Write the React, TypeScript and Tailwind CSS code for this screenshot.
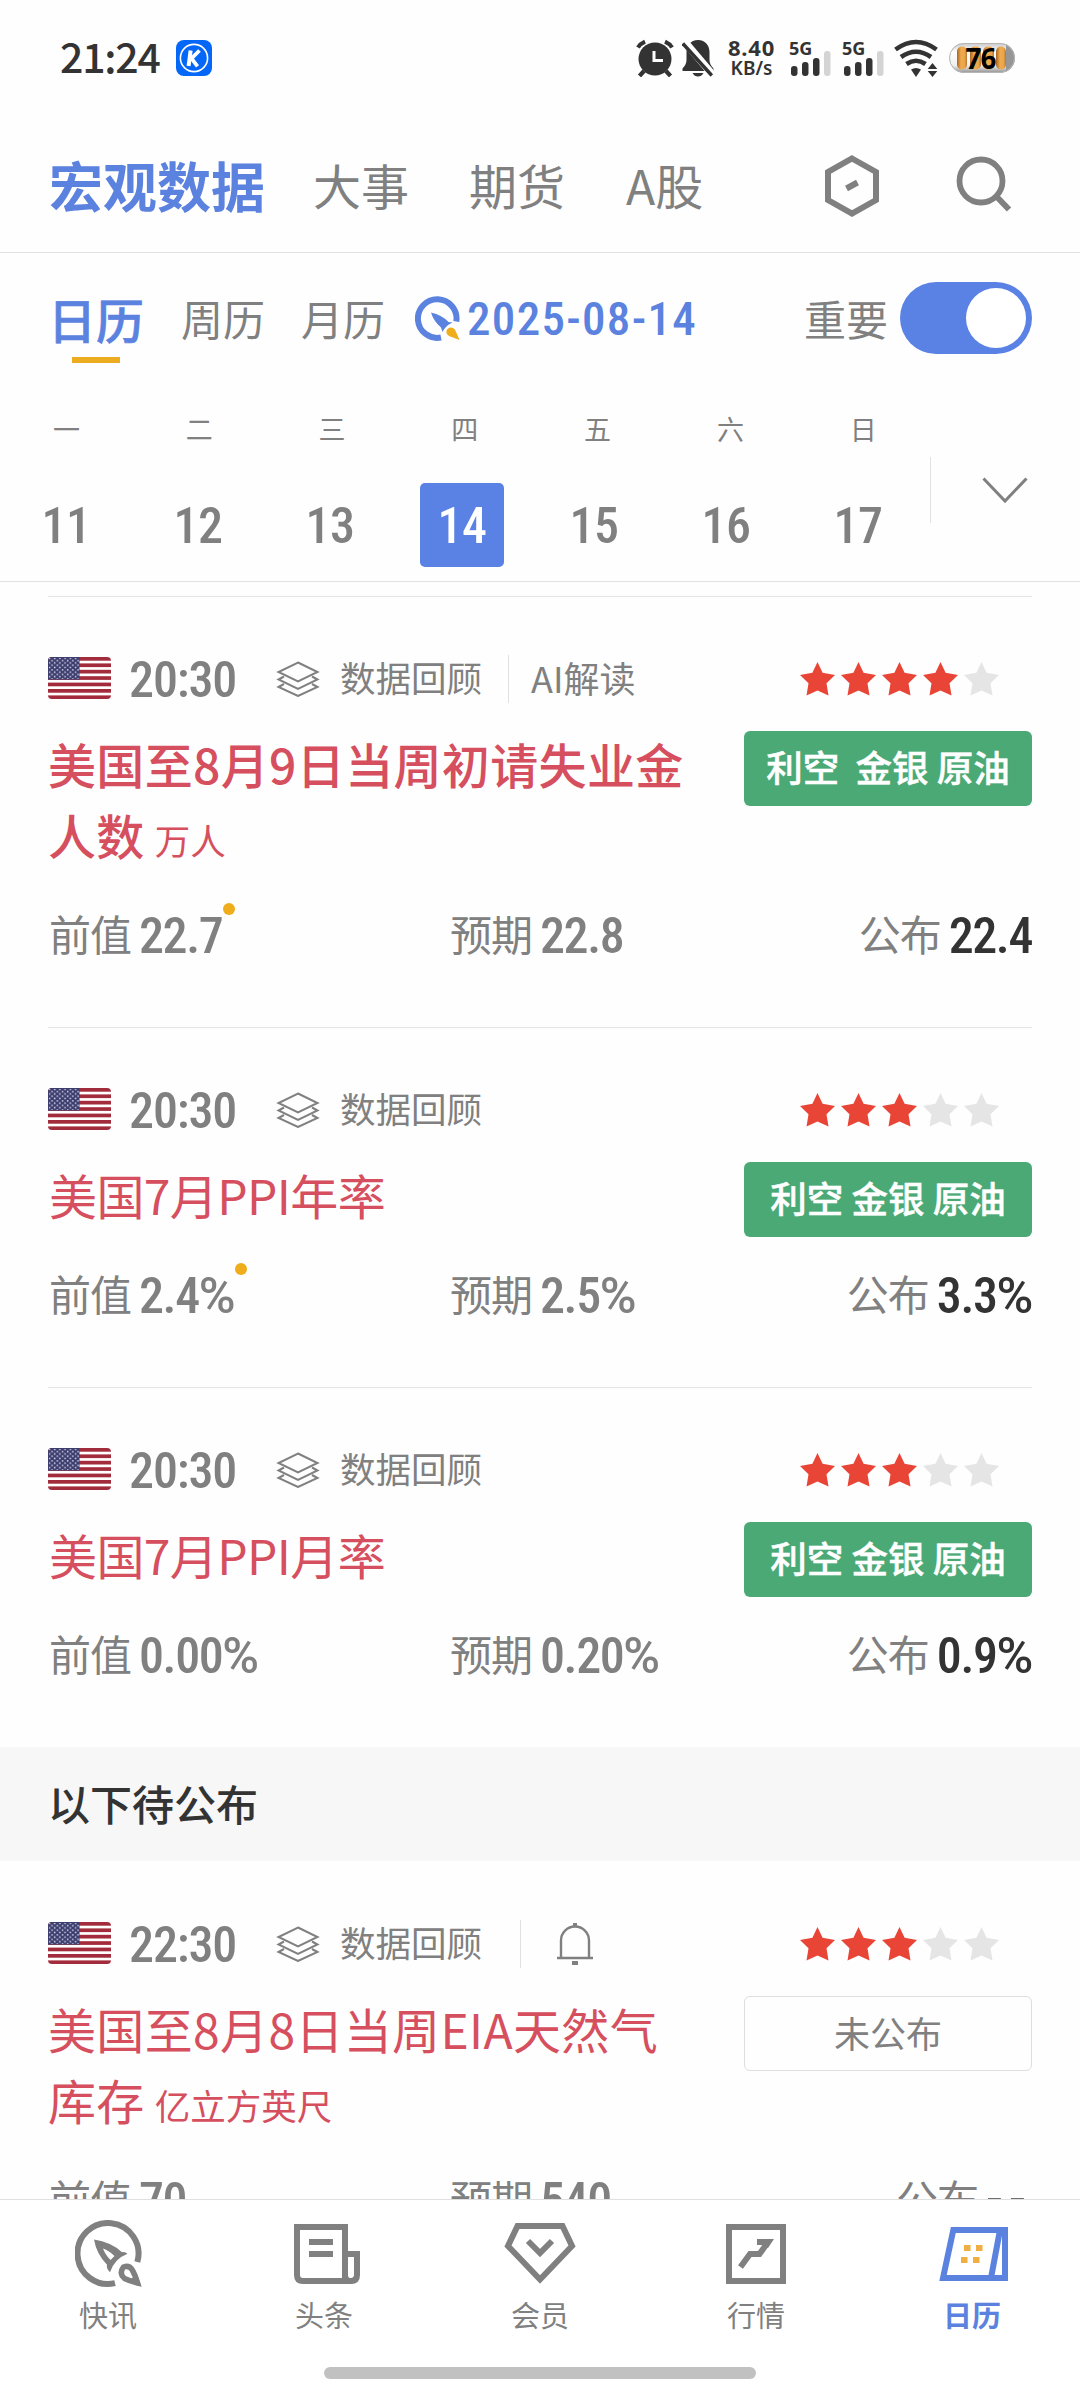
import type { ReactNode } from 'react'

type EventItem = {
  id: string
  time: string
  title: string
  unit?: string
  bold?: boolean
  stars: number
  effect?: string
  ai?: boolean
  remind?: boolean
  revised?: boolean
  previous: string
  forecast: string
  actual: string
}

const PUBLISHED: EventItem[] = [
  {
    id: 'jobless',
    time: '20:30',
    title: '美国至8月9日当周初请失业金人数',
    unit: '万人',
    bold: true,
    stars: 4,
    effect: '利空  金银 原油',
    ai: true,
    revised: true,
    previous: '22.7',
    forecast: '22.8',
    actual: '22.4',
  },
  {
    id: 'ppi-year',
    time: '20:30',
    title: '美国7月PPI年率',
    stars: 3,
    effect: '利空 金银 原油',
    revised: true,
    previous: '2.4%',
    forecast: '2.5%',
    actual: '3.3%',
  },
  {
    id: 'ppi-month',
    time: '20:30',
    title: '美国7月PPI月率',
    stars: 3,
    effect: '利空 金银 原油',
    previous: '0.00%',
    forecast: '0.20%',
    actual: '0.9%',
  },
]

const PENDING: EventItem[] = [
  {
    id: 'eia',
    time: '22:30',
    title: '美国至8月8日当周EIA天然气库存',
    unit: '亿立方英尺',
    stars: 3,
    remind: true,
    previous: '70',
    forecast: '540',
    actual: '--',
  },
]

const WEEKDAYS = ['一', '二', '三', '四', '五', '六', '日']
const DAYS = [11, 12, 13, 14, 15, 16, 17]
const SELECTED_DAY = 14

function Num({ children, className = '' }: { children: ReactNode; className?: string }) {
  return (
    <span className={`font-['Roboto_Condensed','Roboto',sans-serif] font-medium whitespace-nowrap ${className}`}>
      {children}
    </span>
  )
}

function SignalIcon() {
  return (
    <div className="relative h-[36px] w-[42px]">
      <span className="absolute -top-[1px] left-0 font-['Noto_Sans',sans-serif] text-[18px] leading-[18px] font-bold">5G</span>
      <svg className="absolute bottom-0 left-0" width="42" height="36" viewBox="0 0 42 36">
        <rect x="2" y="26" width="6.5" height="10" rx="3" fill="#333" />
        <rect x="13" y="22" width="6.5" height="14" rx="3" fill="#333" />
        <rect x="24" y="18" width="6.5" height="18" rx="3" fill="#333" />
        <rect x="35" y="11" width="6.5" height="25" rx="3" fill="#d4d4d4" />
      </svg>
    </div>
  )
}

function Battery() {
  return (
    <div className="relative h-[30px] w-[66px]">
      <svg width="66" height="30" viewBox="0 0 66 30">
        <defs>
          <linearGradient id="shell" x1="0" y1="0" x2="0" y2="1">
            <stop offset="0" stopColor="#c9c9c9" />
            <stop offset="0.3" stopColor="#fff" />
            <stop offset="0.75" stopColor="#eee" />
            <stop offset="1" stopColor="#8f8f8f" />
          </linearGradient>
          <linearGradient id="cell" x1="0" y1="0" x2="1" y2="0">
            <stop offset="0" stopColor="#a8641f" />
            <stop offset="0.4" stopColor="#f0ab4e" />
            <stop offset="0.75" stopColor="#eba64a" />
            <stop offset="1" stopColor="#b87531" />
          </linearGradient>
          <clipPath id="pill">
            <rect width="66" height="30" rx="15" />
          </clipPath>
        </defs>
        <g clipPath="url(#pill)">
          <rect width="66" height="30" fill="url(#shell)" />
          <rect x="57" width="9" height="30" fill="#969696" />
        </g>
        <rect x="0.5" y="0.5" width="65" height="29" rx="14.5" fill="none" stroke="#b5b5b5" />
        <rect x="8" y="3.500" width="10" height="23" rx="5" fill="url(#cell)" />
        <rect x="21" y="3.500" width="11" height="23" rx="5" fill="url(#cell)" />
        <rect x="34" y="3.500" width="11" height="23" rx="5" fill="url(#cell)" />
        <rect x="47" y="3.500" width="10" height="23" rx="5" fill="url(#cell)" />
      </svg>
      <span className="absolute inset-0 pr-[3px] text-center font-['Noto_Sans',sans-serif] text-[28px] leading-[30px] font-bold tracking-[-1px] text-black">
        76
      </span>
    </div>
  )
}

function StatusBar() {
  return (
    <div className="flex h-[116px] shrink-0 items-center pr-[65px] pl-[60px] text-[#333]">
      <span className="mb-[6px] w-[102px] text-[41px] leading-none font-medium tracking-[-1.2px]">21:24</span>
      <svg className="ml-[14px]" width="36" height="36" viewBox="0 0 36 36">
        <rect width="36" height="36" rx="8" fill="#0467f8" />
        <circle cx="18" cy="18" r="13.6" fill="none" stroke="#fff" strokeWidth="1.6" />
        <path d="M14.6 10.500 12.600 26" stroke="#fff" strokeWidth="4" />
        <path d="M23.500 10.500 15.500 18.500l6 7.800" fill="none" stroke="#fff" strokeWidth="3.800" />
      </svg>
      <div className="ml-auto flex items-center">
        <svg width="38" height="38" viewBox="0 0 38 38">
          <g stroke="#333" strokeWidth="4.2">
            <path d="M2 8.500Q4.500 4.500 9 2.600M36 8.500Q33.500 4.500 29 2.600" fill="none" />
            <path d="m8 32-4.500 5M30 32l4.500 5" />
          </g>
          <circle cx="19" cy="20" r="16.500" fill="#333" />
          <path d="M18 12v9.500h9" fill="none" stroke="#fff" strokeWidth="3" />
        </svg>
        <svg className="ml-[8px]" width="32" height="38" viewBox="0 0 32 38">
          <path d="M16 1C8.500 1 4.500 7 4.500 13v8c0 3-1.500 6-4 8.500V32h31v-2.500c-2.500-2.500-4-5.500-4-8.500v-8C27.500 7 23.500 1 16 1Z" fill="#333" />
          <path d="M10.500 34h11q-2 3.500-5.500 3.500T10.500 34Z" fill="#333" />
          <path d="m2 2 29 34" stroke="#fff" strokeWidth="7.500" />
          <path d="m.8 4.500 29 32" stroke="#333" strokeWidth="3.400" />
        </svg>
        <div className="ml-[13px] flex w-[49px] flex-col items-center font-['Noto_Sans',sans-serif]">
          <span className="text-[22px] leading-[21px] font-bold tracking-[0.8px]">8.40</span>
          <span className="text-[19px] leading-[21px] font-semibold">KB/s</span>
        </div>
        <div className="ml-[13px]">
          <SignalIcon />
        </div>
        <div className="ml-[11px]">
          <SignalIcon />
        </div>
        <svg className="ml-[10px]" width="46" height="38" viewBox="0 0 46 38">
          <g fill="none" stroke="#333" strokeWidth="4.600">
            <path d="M1.500 10.500Q22 -4.500 42.500 10.500" />
            <path d="M7 18Q22 7.500 37 18" />
            <path d="M12.500 25Q22 18.500 31.500 25" />
          </g>
          <path d="M17 30.500q5-3 10 0l-5 7.500Z" fill="#333" />
          <path d="m38.500 24 4.800 6h-9.600ZM33.700 32h9.600l-4.800 6Z" fill="#333" />
        </svg>
        <div className="ml-[9px]">
          <Battery />
        </div>
      </div>
    </div>
  )
}

function Header() {
  return (
    <header className="flex h-[137px] shrink-0 items-center border-b border-[#e2e2e2] pr-[68px] pl-[49px] text-[48px] leading-none text-[#808080]">
      <span className="mt-[2px] text-[54px] font-bold text-[#5b82df]">宏观数据</span>
      <span className="ml-[48px]">大事</span>
      <span className="ml-[60px]">期货</span>
      <span className="ml-[61px]">A股</span>
      <svg className="mt-1 ml-auto" width="56" height="64" viewBox="0 0 56 64">
        <path d="M28 4.500 52 18v28L28 59.500 4 46V18Z" fill="none" stroke="#808080" strokeWidth="6" />
        <path d="m22.500 34.500 11-6" stroke="#808080" strokeWidth="6" />
      </svg>
      <svg className="ml-[76px]" width="56" height="56" viewBox="0 0 56 56">
        <circle cx="25" cy="25" r="21.500" fill="none" stroke="#808080" strokeWidth="5.800" />
        <path d="m40 40 13 13.500" stroke="#808080" strokeWidth="6" />
      </svg>
    </header>
  )
}

function FilterRow() {
  return (
    <div className="flex h-[130px] items-center pr-[48px] pl-[48px] text-[42px] leading-none text-[#808080]">
      <span className="relative text-[48px] font-medium text-[#5b82df] [-webkit-text-stroke:0.6px_#5b82df]">
        日历
        <span className="absolute top-[63px] left-[24px] h-[6px] w-[48px] bg-[#edac20]" />
      </span>
      <span className="ml-[37px]">周历</span>
      <span className="ml-[36px]">月历</span>
      <svg className="ml-[30px]" width="45" height="45" viewBox="0 0 45 45">
        <path d="M26 41.500A19.300 19.300 0 1 1 41.300 25.500" fill="none" stroke="#5b82df" strokeWidth="6" />
        <path d="M16 16.500q11 2.500 17.500 9.500l4 .5q-7 3-10 9.500l-1.500-4.500Q18.500 25 16 16.500Z" fill="#5b82df" />
        <path d="M32 33.500q3.500-4 8 0l4.500 10.500-10.500-4q-4-3-2-6.500Z" fill="#efac1b" />
      </svg>
      <Num className="ml-[7px] text-[47px] tracking-[1.3px] text-[#5b82df]">2025-08-14</Num>
      <span className="mb-px ml-auto">重要</span>
      <span className="ml-[12px] flex h-[72px] w-[132px] items-center justify-end rounded-full bg-[#5a82e4] pr-[6px]">
        <span className="h-[60px] w-[60px] rounded-full bg-white" />
      </span>
    </div>
  )
}

function WeekStrip() {
  return (
    <div className="flex h-[199px] border-b border-[#e2e2e2] text-[#808080]">
      <div className="w-[930px]">
        <div className="flex">
          {WEEKDAYS.map((label) => (
            <span key={label} className="w-[132.8px] text-center text-[27px] leading-[92px]">
              {label}
            </span>
          ))}
        </div>
        <div className="mt-[8px] flex">
          {DAYS.map((day) => (
            <div key={day} className="flex w-[132px] justify-center">
              <Num
                className={`flex h-[84px] w-[84px] items-center justify-center rounded-[5px] pt-[3px] text-[50px] tracking-[-0.5px] ${
                  day === SELECTED_DAY ? 'bg-[#5a82e4] text-white' : ''
                }`}
              >
                {day}
              </Num>
            </div>
          ))}
        </div>
      </div>
      <div className="mt-[74px] h-[66px] w-px bg-[#e2e2e2]" />
      <svg className="mt-[94px] ml-[51px]" width="46" height="28" viewBox="0 0 46 28">
        <path d="m1.500 1.500 21.500 22.500L44.500 1.500" fill="none" stroke="#808080" strokeWidth="3" />
      </svg>
    </div>
  )
}

function Flag() {
  return (
    <svg className="mb-[2px]" width="63" height="42" viewBox="0 0 63 42">
      <defs>
        <clipPath id="flag-corners">
          <rect width="63" height="42" rx="4" />
        </clipPath>
        <pattern id="flag-stars" width="5.200" height="4.600" patternUnits="userSpaceOnUse">
          <circle cx="1.500" cy="1.300" r="0.850" fill="#d5d6ea" />
          <circle cx="4.100" cy="3.600" r="0.850" fill="#d5d6ea" />
        </pattern>
      </defs>
      <g clipPath="url(#flag-corners)">
        <rect width="63" height="42" fill="#fff" />
        {[0, 1, 2, 3, 4, 5, 6].map((i) => (
          <rect key={i} y={i * 6.4} width="63" height="3.700" fill="#a22c3b" />
        ))}
        <rect width="31.500" height="22.600" fill="#3d3e6e" />
        <rect x="1" y="1" width="30" height="21" fill="url(#flag-stars)" />
      </g>
    </svg>
  )
}

function LayersIcon() {
  return (
    <svg width="44" height="36" viewBox="0 0 44 36">
      <g fill="none" stroke="#808080" strokeWidth="2">
        <path d="M22 1.500 41.500 11 22 20.300 2.500 11Z" />
        <path d="m8 15.500-5.500 3L22 28l19.500-9.500-5.500-3" />
        <path d="m8 23-5.500 3L22 35l19.500-9-5.500-3" />
      </g>
    </svg>
  )
}

function Stars({ count }: { count: number }) {
  return (
    <div className="mr-[33px] ml-auto flex gap-[6px]">
      {[1, 2, 3, 4, 5].map((n) => (
        <svg key={n} width="35" height="34" viewBox="0 0 35 34">
          <path
            d="M17.500 0 22.600 10.800 35 13 26.500 21.300 28.500 33.500 17.500 28.500 6.500 33.500 8.500 21.300 0 13 12.400 10.800Z"
            fill={n <= count ? '#e94537' : '#e5e5e5'}
          />
        </svg>
      ))}
    </div>
  )
}

function Figure({ value }: { value: string }) {
  if (value === '--') {
    return <span className="-mt-[5px] font-['Roboto',sans-serif] tracking-[6px]">{value}</span>
  }
  if (value.endsWith('%')) {
    return (
      <>
        {value.slice(0, -1)}
        <span className="font-['Roboto',sans-serif]">%</span>
      </>
    )
  }
  return <>{value}</>
}

function Value({ label, value, className = '', dot }: { label: string; value: string; className?: string; dot?: boolean }) {
  return (
    <div className="flex items-center">
      <span className="mb-[4px] text-[42px] leading-none tracking-[-1px]">{label}</span>
      <span className="relative ml-[8px] flex">
        <Num className={`mt-[2px] flex text-[50px] leading-[60px] tracking-[-1.4px] ${className}`}>
          <Figure value={value} />
        </Num>
        {dot && <span className="absolute -top-px -right-[13px] h-3 w-3 rounded-full bg-[#efac1b]" />}
      </span>
    </div>
  )
}

function EventCard({ item, first }: { item: EventItem; first?: boolean }) {
  return (
    <article className={`mx-[48px] border-t pt-[58px] pb-[62px] text-[#808080] ${first ? 'border-transparent' : 'border-[#e4e4e4]'}`}>
      <div className="flex h-[48px] items-center text-[35.5px] leading-none">
        <Flag />
        <Num className="mt-px ml-[18px] w-[147px] text-[50px] tracking-[-1.1px]">{item.time}</Num>
        <LayersIcon />
        <span className="mb-1 ml-[20px] w-[144px]">数据回顾</span>
        {item.ai && (
          <>
            <span className="ml-[24px] h-full w-px bg-[#e0e0e0]" />
            <span className="mb-1 ml-[22px] text-[36px]">AI解读</span>
          </>
        )}
        {item.remind && (
          <>
            <span className="ml-[36px] h-full w-px bg-[#e0e0e0]" />
            <svg className="ml-[35px]" width="38" height="42" viewBox="0 0 38 42">
              <path d="M5 35V17.500a14 14 0 0 1 28 0V35" fill="none" stroke="#808080" strokeWidth="2.400" />
              <path d="M1 35h36" stroke="#808080" strokeWidth="2.600" />
              <path d="M19 0v4M16 40h6" stroke="#808080" strokeWidth="4" />
            </svg>
          </>
        )}
        <Stars count={item.stars} />
      </div>

      <div className="mt-[25px] flex justify-between">
        <h2
          className={`w-[644px] text-[48px] leading-[71px] text-[#d64f5e] ${item.bold ? 'font-medium' : 'font-normal'} ${
            item.unit ? 'tracking-[0.35px]' : 'pl-px tracking-[-0.6px]'
          }`}
        >
          {item.title}
          {item.unit && <span className="ml-[10px] text-[35.500px] leading-none font-normal tracking-normal">{item.unit}</span>}
        </h2>
        {item.effect ? (
          <div className="mt-[3px] -mb-[10px] flex h-[75px] w-[288px] items-center justify-center rounded-[6px] bg-[#4aa975]">
            <span className="mb-[3px] text-[36.5px] leading-none font-medium whitespace-pre text-white [-webkit-text-stroke:0.5px_white]">
              {item.effect}
            </span>
          </div>
        ) : (
          <div className="mt-[3px] flex h-[75px] w-[288px] items-center justify-center rounded-[6px] border border-[#dedede]">
            <span className="mb-[3px] text-[36px] leading-none">未公布</span>
          </div>
        )}
      </div>

      <div className="mt-[35px] flex h-[60px] items-center pl-px">
        <div className="w-[401px]">
          <Value label="前值" value={item.previous} dot={item.revised} />
        </div>
        <Value label="预期" value={item.forecast} />
        <div className="ml-auto">
          <Value label="公布" value={item.actual} className="text-[#333]" />
        </div>
      </div>
    </article>
  )
}

function NewsflashIcon() {
  return (
    <svg className="ml-[2px]" width="68" height="68" viewBox="0 0 68 68">
      <path d="M40 63.200A30.500 30.500 0 1 1 62.300 42" fill="none" stroke="#808080" strokeWidth="6" />
      <path
        d="M19 19.500Q36 22 47 32.200q3-1 5.500 1.500-13 5-17.500 18.500-4-4-3-7.500Q21.500 34 19 19.500Zm9 9q2 6 7.500 11.500l4-4Q34 30.500 28 28.500Z"
        fill="#808080"
        fillRule="evenodd"
      />
      <path d="M48.500 47q5.500-2 8.500 2.500 3 5 5.500 13.500-8-2-13-4.500-6-5-1-11.500Z" fill="none" stroke="#808080" strokeWidth="5.500" />
      <path d="m56 59 10.500 7.500L62 54Z" fill="#808080" />
    </svg>
  )
}

function HeadlinesIcon() {
  return (
    <svg className="ml-[6px]" width="66" height="60" viewBox="0 0 66 60">
      <g fill="none" stroke="#808080" strokeWidth="6">
        <path d="M51 56V3H3v48q0 6 6 6h48q6 0 6-6V30H51" />
        <path d="M51 48q0 9 6 9 6 0 6-9" strokeWidth="5" />
        <path d="M15 18h24M15 30h24" />
      </g>
    </svg>
  )
}

function MemberIcon() {
  return (
    <svg width="72" height="62" viewBox="0 0 72 62">
      <g fill="none" stroke="#808080" strokeWidth="6">
        <path d="M13.500 3h45L68 23 36 56.500 4 23Z" />
        <path d="m24 18 12 12 12-12" />
      </g>
    </svg>
  )
}

function MarketIcon() {
  return (
    <svg width="60" height="60" viewBox="0 0 60 60">
      <rect x="3" y="3" width="54" height="54" fill="none" stroke="#808080" strokeWidth="6" />
      <path d="M14.500 43 24 30h9.500L42 18" fill="none" stroke="#808080" strokeWidth="6" />
      <path d="M31 15h17l-6 9-5-3h-6Z" fill="#808080" />
    </svg>
  )
}

function CalendarIcon() {
  return (
    <svg className="ml-[4px]" width="70" height="54" viewBox="0 0 70 54">
      <path d="M14.300 3H66v48H4Z" fill="none" stroke="#5b82df" strokeWidth="6" />
      <path d="M61 3 52 51" stroke="#5b82df" strokeWidth="6" />
      <g fill="#efb041">
        <rect x="25" y="18" width="6.500" height="6" />
        <rect x="37" y="18" width="6.500" height="6" />
        <rect x="22" y="30" width="6.500" height="6" />
        <rect x="34" y="30" width="6.500" height="6" />
      </g>
    </svg>
  )
}

const TABS = [
  { label: '快讯', icon: <NewsflashIcon /> },
  { label: '头条', icon: <HeadlinesIcon /> },
  { label: '会员', icon: <MemberIcon /> },
  { label: '行情', icon: <MarketIcon /> },
  { label: '日历', icon: <CalendarIcon />, active: true },
]

function TabBar() {
  return (
    <nav className="h-[201px] shrink-0 border-t border-[#e0e0e0] bg-white">
      <div className="flex">
        {TABS.map(({ label, icon, active }) => (
          <div key={label} className="flex w-[216px] flex-col items-center">
            <div className="mt-[16px] flex h-[76px] items-center">{icon}</div>
            <span className={`mt-[7px] text-[29px] leading-[30px] ${active ? 'font-bold text-[#5b82df]' : 'text-[#808080]'}`}>
              {label}
            </span>
          </div>
        ))}
      </div>
      <div className="mx-auto mt-[38px] h-3 w-[432px] rounded-full bg-[#c1c1c1]" />
    </nav>
  )
}

export default function App() {
  return (
    <div className="flex h-[2400px] w-[1080px] flex-col overflow-hidden bg-[#fefefe] font-['Noto_Sans_CJK_SC',sans-serif]">
      <StatusBar />
      <Header />
      <div className="shrink-0">
        <FilterRow />
        <WeekStrip />
      </div>
      <main className="min-h-0 flex-1 overflow-hidden pt-[14px]">
        {PUBLISHED.map((item) => (
          <EventCard key={item.id} item={item} />
        ))}
        <h1 className="flex h-[114px] items-center bg-[#f7f7f7] pl-[48px] text-[42px] leading-none font-medium text-[#333]">
          <span className="mb-[3px]">以下待公布</span>
        </h1>
        {PENDING.map((item) => (
          <EventCard key={item.id} item={item} first />
        ))}
      </main>
      <TabBar />
    </div>
  )
}
